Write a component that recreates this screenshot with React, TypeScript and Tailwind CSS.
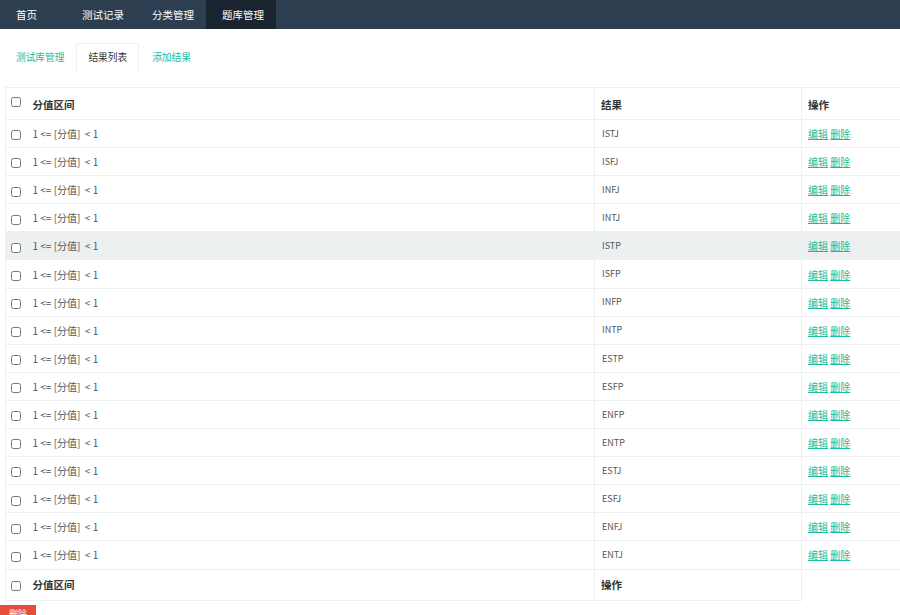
const NAV = [
  { name: "首页", w: "w-[66px]", active: false },
  { name: "测试记录", w: "w-[70px]", active: false },
  { name: "分类管理", w: "w-[70px]", active: false },
  { name: "题库管理", w: "w-[70px]", active: true },
];

const RESULTS = [
  "ISTJ", "ISFJ", "INFJ", "INTJ", "ISTP", "ISFP", "INFP", "INTP",
  "ESTP", "ESFP", "ENFP", "ENTP", "ESTJ", "ESFJ", "ENFJ", "ENTJ",
];

const font = { fontFamily: "'Noto Sans CJK SC', 'Liberation Sans', sans-serif" };

function Box() {
  return <input type="checkbox" className="w-[10px] h-[10px] m-0 align-middle" />;
}

export default function App() {
  return (
    <div className="w-[900px] h-[615px] overflow-hidden bg-white text-[#333]" style={font}>
      <div className="h-[29px] bg-[#2c3e50] flex">
        {NAV.map((n) => (
          <div
            key={n.name}
            className={`${n.w} h-full pl-[16px] flex items-center text-[10.5px] text-white ${n.active ? "bg-[#1a242f]" : ""}`}
          >
            {n.name}
          </div>
        ))}
      </div>

      <div className="flex pl-[4px] mt-[14px] h-[28px] text-[9.7px]">
        <div className="px-[12px] flex items-center text-[#18bc9c]">测试库管理</div>
        <div className="px-[11px] flex items-center border border-b-0 border-[#ecf0f1] rounded-t-[3px] text-[#333]">结果列表</div>
        <div className="px-[13px] flex items-center text-[#18bc9c]">添加结果</div>
      </div>

      <table className="ml-[5px] mt-[16px] w-[895px] border-collapse text-[10px] table-fixed">
        <colgroup>
          <col className="w-[20px]" />
          <col className="w-[569px]" />
          <col className="w-[207px]" />
          <col />
        </colgroup>
        <thead>
          <tr className="h-[32px]">
            <th className="border border-[#ecf0f1] border-r-0 text-center align-top pt-[5px]"><Box /></th>
            <th className="border border-[#ecf0f1] border-x-0 text-left pl-[7px] font-bold text-[10.5px] pt-[3px]">分值区间</th>
            <th className="border border-[#ecf0f1] border-r-0 text-left pl-[6px] font-bold text-[10.5px] pt-[3px]">结果</th>
            <th className="border border-[#ecf0f1] border-r-0 text-left pl-[6px] font-bold text-[10.5px] pt-[3px]">操作</th>
          </tr>
        </thead>
        <tbody>
          {RESULTS.map((r) => (
            <tr key={r} className={`h-[28.1px] ${r === "ISTP" ? "bg-[#ecf0f1]" : ""}`}>
              <td className="border border-[#ecf0f1] border-r-0 text-center"><Box /></td>
              <td className="border border-[#ecf0f1] border-x-0 pl-[7px] text-[#555] whitespace-pre">{"1 <= [分值]  < 1"}</td>
              <td className="border border-[#ecf0f1] border-r-0 pl-[7px] text-[#555] text-[9px]">{r}</td>
              <td className="border border-[#ecf0f1] border-r-0 pl-[6px]">
                <a className="text-[#18bc9c] underline">编辑</a>{" "}
                <a className="text-[#18bc9c] underline">删除</a>
              </td>
            </tr>
          ))}
          <tr className="h-[31px]">
            <td className="border border-[#ecf0f1] border-r-0 text-center align-top pt-[7px]"><Box /></td>
            <td className="border border-[#ecf0f1] border-x-0 pl-[7px] font-bold text-[10.5px]">分值区间</td>
            <td className="border border-[#ecf0f1] pl-[6px] font-bold text-[10.5px]">操作</td>
            <td className="border-t border-[#ecf0f1]"></td>
          </tr>
        </tbody>
      </table>

      <button className="block mt-[4px] bg-[#e74c3c] text-white text-[9px] px-[9px] h-[18px] leading-[18px]">删除</button>
    </div>
  );
}
